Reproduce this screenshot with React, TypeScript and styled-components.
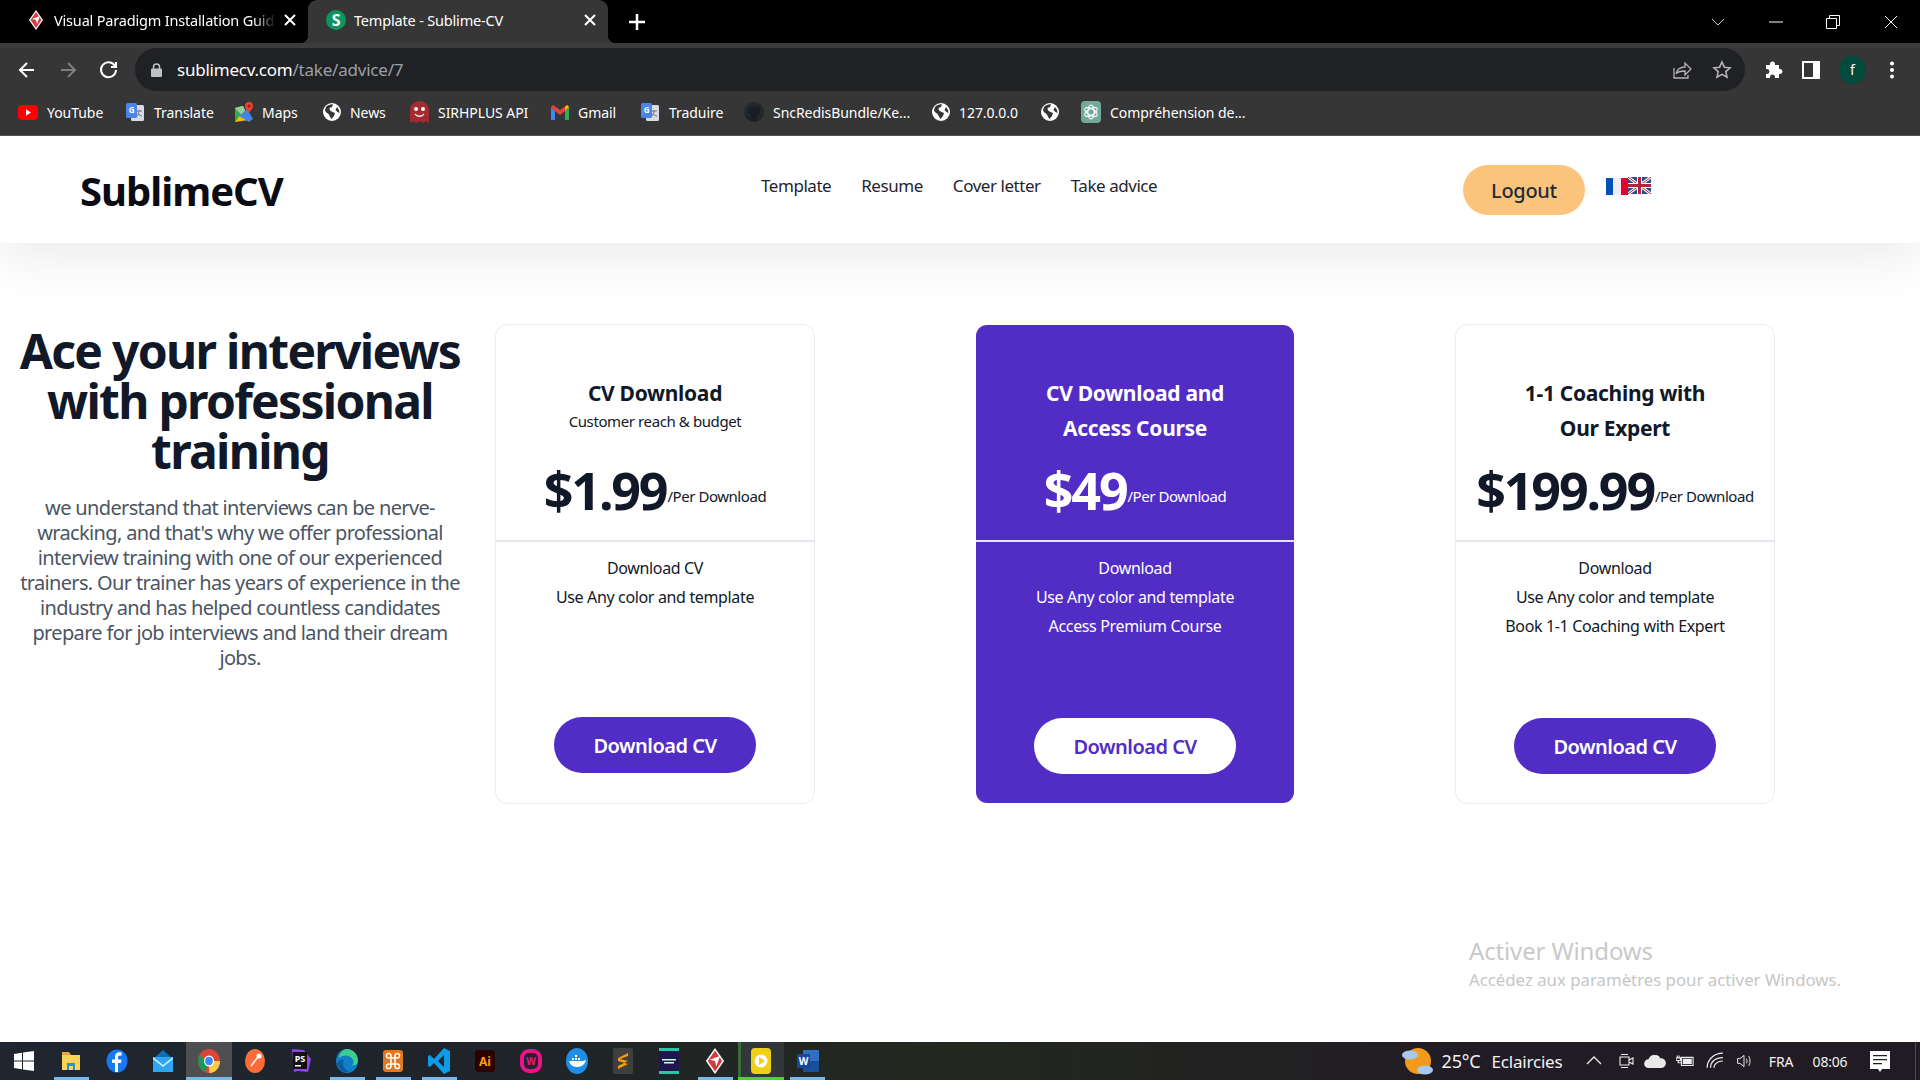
import React from 'react';
import styled, { createGlobalStyle } from 'styled-components';

const Global = createGlobalStyle`
  html, body { margin: 0; padding: 0; background: #fff; }
  body { font-family: "Noto Sans", "Open Sans", sans-serif; }
  * { box-sizing: border-box; }
`;

const Screen = styled.div`
  position: relative; width: 1920px; height: 1080px; overflow: hidden;
  display: flex; flex-direction: column; background: #fff;
`;

/* ---------- browser chrome ---------- */
const TabStrip = styled.div`
  height: 43px; background: #000; display: flex; align-items: stretch; padding-left: 8px; flex: none;
`;
const Tab = styled.div<{ $active?: boolean }>`
  position: relative; width: 300px; display: flex; align-items: center; gap: 8px; padding: 0 12px 3px 18px;
  background: ${p => (p.$active ? '#363636' : 'transparent')};
  border-radius: 9px 9px 0 0; color: #fff; font-size: 14.5px; letter-spacing: -0.18px;
  ${p => p.$active && `
    &::before, &::after {
      content: ''; position: absolute; bottom: 0; width: 8px; height: 8px;
    }
    &::before { left: -8px; background: radial-gradient(circle at 0 0, #000 8px, #363636 8.5px); }
    &::after { right: -8px; background: radial-gradient(circle at 100% 0, #000 8px, #363636 8.5px); }
  `}
`;
const TabTitle = styled.span<{ $fade?: boolean }>`
  flex: 1; white-space: nowrap; overflow: hidden;
  ${p => p.$fade && 'mask-image: linear-gradient(to right, #000 90%, transparent);'}
`;
const TabPlus = styled.div`
  width: 56px; display: flex; align-items: center; justify-content: center; padding-left: 2px;
`;
const WindowControls = styled.div`
  margin-left: auto; display: flex; align-items: center;
`;
const WinButton = styled.div<{ $w: number }>`
  width: ${p => p.$w}px; display: flex; justify-content: center; align-items: center;
`;
const ToolBar = styled.div`
  height: 48px; flex: none; background: #363636; border-top: 5px solid #3c3c3c; display: flex; align-items: stretch;
`;
const NavIcons = styled.div`
  width: 135px; padding-left: 17px; display: flex; align-items: center; gap: 21px;
`;
const UrlBar = styled.div`
  width: 1610px; background: #202124; border-radius: 22px; display: flex; align-items: center; padding: 0 13px 0 16px;
  font-size: 17px; letter-spacing: -0.22px; color: #fff;
`;
const UrlText = styled.span`
  margin-left: 15px; flex: 1;
  em { font-style: normal; color: #9aa0a6; }
`;
const UrlActions = styled.div`
  display: flex; align-items: center; gap: 20px;
`;
const ToolRight = styled.div`
  flex: 1; display: flex; align-items: center; padding-left: 18px; gap: 19px;
`;
const Avatar = styled.div`
  width: 27px; height: 28px; border-radius: 50%; background: #024a3c; color: #fff;
  font-size: 14px; display: flex; align-items: center; justify-content: center;
`;
const BookmarkBar = styled.div`
  height: 45px; flex: none; background: #363636; border-bottom: 1px solid #555;
  display: flex; align-items: center; padding: 0 0 2px 18px; color: #fff; font-size: 14px; letter-spacing: -0.05px;
`;
const Bookmark = styled.div<{ $w: number }>`
  width: ${p => p.$w}px; display: flex; align-items: center; gap: 9px; white-space: nowrap;
`;

/* ---------- page header ---------- */
const SiteHeader = styled.header`
  height: 107px; flex: none; background: #fff; display: flex; align-items: center; padding-left: 80px;
  box-shadow: 0 18px 50px rgba(0, 0, 0, 0.075); position: relative;
`;
const Logo = styled.div`
  width: 681px; font-size: 40px; font-weight: 700; color: #0b0b14; letter-spacing: -1px; line-height: 1; padding-top: 2px;
`;
const SiteNav = styled.nav`
  display: flex; gap: 30px; margin-bottom: 8px; width: 702px;
  font-size: 17px; color: #1f2430; letter-spacing: -0.45px;
`;
const LogoutButton = styled.button`
  width: 122px; height: 50px; border: none; border-radius: 25px; background: #fcc47b; color: #1f2d3a;
  font: 500 20px "Noto Sans", sans-serif; letter-spacing: -0.3px; padding: 2px 0 0;
`;
const Flags = styled.div`
  margin-left: 21px; margin-bottom: 7px; display: flex; align-items: center;
`;

/* ---------- page content ---------- */
const Main = styled.main`
  flex: 1; display: flex; padding-top: 81px; align-items: flex-start; gap: 15px;
`;
const Intro = styled.section`
  width: 480px; flex: none; text-align: center; padding-top: 2px;
`;
const Headline = styled.h1`
  margin: 0 0 20px; font-size: 48px; line-height: 50px; font-weight: 700; color: #111827; white-space: nowrap; letter-spacing: -1.7px;
`;
const Lead = styled.p`
  margin: -1px 0 0; font-size: 20px; line-height: 25px; color: #4b5563; white-space: nowrap; letter-spacing: -0.65px;
`;
const Plans = styled.div`
  display: flex; gap: 160px;
`;
const Card = styled.article<{ $featured?: boolean }>`
  width: 320px; height: 480px; display: flex; flex-direction: column; border-radius: 12px;
  border: 1px solid ${p => (p.$featured ? 'transparent' : '#e8ecf2')};
  background: ${p => (p.$featured ? '#512dc6' : '#fff')};
  background-clip: padding-box;
  color: ${p => (p.$featured ? '#fff' : '#111827')};
`;
const CardHead = styled.div`
  height: 217px; flex: none; border-bottom: 2px solid #e5e7eb; padding-top: 51px; text-align: center;
  display: flex; flex-direction: column;
`;
const CardTitle = styled.h3`
  margin: 0; font-size: 21px; line-height: 35px; font-weight: 700; letter-spacing: -0.3px; white-space: nowrap;
`;
const CardSub = styled.div`
  font-size: 15px; line-height: 24px; margin-top: -2px; letter-spacing: -0.4px;
`;
const PriceRow = styled.div`
  margin-top: auto; height: 86px; display: flex; align-items: flex-start; justify-content: center; white-space: nowrap; line-height: 72px;
`;
const Price = styled.span`
  font-size: 52px; font-weight: 700; letter-spacing: -2.2px;
`;
const Per = styled.span`
  font-size: 15px; line-height: 20px; letter-spacing: -0.45px; margin: 32px 0 0 1px;
`;
const CardBody = styled.div`
  flex: 1; display: flex; flex-direction: column; align-items: center; padding-top: 12px;
  font-size: 16px; line-height: 29px; letter-spacing: -0.35px;
`;
const DownloadButton = styled.button<{ $featured?: boolean; $low?: boolean }>`
  margin-top: auto; margin-bottom: ${p => (p.$low ? 29 : 30)}px; width: 202px; height: 56px; border: none; border-radius: 28px;
  background: ${p => (p.$featured ? '#fff' : '#512dc6')};
  color: ${p => (p.$featured ? '#512dc6' : '#fff')};
  font: 600 20px "Noto Sans", sans-serif; letter-spacing: -0.5px; padding: 0;
`;
const Watermark = styled.div`
  position: absolute; left: 1469px; top: 935px; color: #c6c6c6; font-size: 16.8px; line-height: 24px; letter-spacing: 0;
  strong { display: block; font-weight: 400; font-size: 24px; line-height: 32px; color: #c9c9c9; margin-bottom: 1px; letter-spacing: -0.15px; }
`;

/* ---------- taskbar ---------- */
const TaskBar = styled.footer`
  height: 38px; flex: none; display: flex; align-items: stretch; color: #f2f2f2;
  background: linear-gradient(90deg, #1f2630 0%, #1e2429 25%, #23281f 50%, #211d24 75%, #211b24 100%);
`;
const TaskItem = styled.div<{ $state?: 'open' | 'active' | 'flash' }>`
  width: 46px; flex: none; display: flex; align-items: center; justify-content: center; position: relative;
  background: ${p => (p.$state === 'active' ? '#4d4f53' : p.$state === 'flash' ? '#32383a' : 'transparent')};
  ${p => p.$state === 'flash' && 'box-shadow: inset 3px 0 0 #3a6b36;'}
  &::after {
    content: ''; position: absolute; bottom: 0; height: 3px;
    left: ${p => (p.$state === 'open' ? '6px' : '0')}; right: ${p => (p.$state === 'open' ? '5px' : '0')};
    background: ${p => (p.$state === 'flash' ? '#4fd13c' : p.$state ? '#76b9ed' : 'transparent')};
  }
`;
const StartButton = styled(TaskItem)`
  width: 48px;
`;
const Tray = styled.div`
  margin-left: auto; display: flex; align-items: center; padding-right: 10px;
`;
const TrayText = styled.span<{ $w: number; $size?: number }>`
  width: ${p => p.$w}px; font-size: ${p => p.$size ?? 14}px; text-align: center; white-space: nowrap; letter-spacing: -0.2px;
`;
const TraySlot = styled.div<{ $w: number }>`
  width: ${p => p.$w}px; display: flex; justify-content: center; align-items: center;
`;
const DesktopEdge = styled.div`
  position: absolute; right: 4px; bottom: 0; width: 1px; height: 38px; background: #4a4a4f;
`;

/* ---------- icons ---------- */
const Globe = () => (
  <svg width="18" height="18" viewBox="0 0 18 18">
    <circle cx="9" cy="9" r="9" fill="#fff" />
    <path d="M3 4c2-2 5-3 7-2.6L9 4 6.500 5 7 7.500 9.500 9 12 10l-1 3-2.500 3C7 14 6.500 12 5.500 11S2 9 2 7zM14 4l2 3 .5 3-2-1-2-2z" fill="#363636" />
  </svg>
);
const Translate = () => (
  <svg width="20" height="20" viewBox="0 0 20 20">
    <rect x="6" y="3" width="13" height="16" rx="1.500" fill="#d9dde3" />
    <rect x="1" y="1" width="11" height="15" rx="1.500" fill="#4a86e8" />
    <text x="6.500" y="11" fontSize="8" fill="#fff" textAnchor="middle" fontFamily="Noto Sans" fontWeight="700">G</text>
    <path d="M12 9h5M14 8v1c0 2-1 4-2 5M13 11c1 2 3 3 4 3" stroke="#6b7280" fill="none" />
  </svg>
);
const Youtube = () => (
  <svg width="20" height="15" viewBox="0 0 20 15">
    <rect width="20" height="15" rx="4" fill="#f00" />
    <path d="M8 4.200l5 3.300-5 3.300z" fill="#fff" />
  </svg>
);
const MapsIcon = () => (
  <svg width="18" height="20" viewBox="0 0 18 20">
    <path d="M0 6l8-2 6 14-14 2z" fill="#fbbc04" />
    <path d="M0 6l6 6-6 8z" fill="#34a853" />
    <path d="M4 14L12 7l6 10-4 3z" fill="#4285f4" />
    <path d="M0 6l8-2 2 4-4 4z" fill="#8fd19e" />
    <path d="M14 0a4 4 0 0 1 4 4c0 3-4 6-4 7-1-2-4-4-4-7a4 4 0 0 1 4-4z" fill="#ea4335" />
    <circle cx="14" cy="4" r="1.500" fill="#8c2318" />
  </svg>
);
const Ghost = () => (
  <svg width="19" height="22" viewBox="0 0 19 22">
    <path d="M0 9a9.500 9 0 0 1 19 0v13l-3-2-3 2-3.500-2-3.500 2-3-2-3 2z" fill="#a62b31" />
    <circle cx="6" cy="8" r="2" fill="#fff" /><circle cx="13" cy="8" r="2" fill="#fff" />
    <path d="M5 13c2 3 7 3 9 0" stroke="#fff" strokeWidth="1.300" fill="none" />
  </svg>
);
const GmailIcon = () => (
  <svg width="18" height="15" viewBox="0 0 18 15">
    <path d="M0 2v13h4V6z" fill="#4285f4" /><path d="M18 2v13h-4V6z" fill="#34a853" />
    <path d="M0 2l4 4 5 4 5-4 4-4-2-2-7 5-7-5z" fill="#ea4335" /><path d="M14 6l4-4-2-2-2 2z" fill="#fbbc04" />
  </svg>
);
const Github = () => (
  <svg width="20" height="20" viewBox="0 0 20 20">
    <circle cx="10" cy="10" r="10" fill="#23282e" />
    <path d="M7 19v-3c-3 1-3-1-4-2 2 0 2 2 4 1 0-1 0-1 1-2-3 0-4-2-4-4 0-1 0-2 1-3 0-1 0-2 .5-2 1 0 2 1 2.500 1h4c.5 0 1.500-1 2.500-1 .5 0 .5 1 .5 2 1 1 1 2 1 3 0 2-1 4-4 4 1 1 1 1.500 1 2v4z" fill="#1a1d21" />
  </svg>
);
const GptIcon = () => (
  <svg width="20" height="22" viewBox="0 0 20 22">
    <rect width="20" height="22" rx="4" fill="#74aa9c" />
    <g fill="none" stroke="#fff" strokeWidth="1.100">
      <ellipse cx="10" cy="11" rx="3.200" ry="7" />
      <ellipse cx="10" cy="11" rx="3.200" ry="7" transform="rotate(60 10 11)" />
      <ellipse cx="10" cy="11" rx="3.200" ry="7" transform="rotate(120 10 11)" />
    </g>
  </svg>
);
const ParadigmIcon = ({ size = 20 }: { size?: number }) => (
  <svg width={size} height={size} viewBox="0 0 20 20">
    <path d="M10 0l7 10-7 10-7-10z" fill="#fff" />
    <path d="M10 2l5.500 8L10 18l-5.500-8z" fill="#d13a3f" />
    <path d="M6 9l8-3-3 8-1-4z" fill="#fff" />
  </svg>
);
const SiteFavicon = () => (
  <svg width="20" height="20" viewBox="0 0 20 20">
    <circle cx="10" cy="10" r="10" fill="#0c9560" />
    <text x="10" y="15.500" textAnchor="middle" fontSize="16" fontWeight="700" fill="#fff" fontFamily="Noto Sans">S</text>
  </svg>
);
const Stroke = ({ d, size = 20, color = '#fff', w = 2, vb = 20 }: { d: string; size?: number; color?: string; w?: number; vb?: number }) => (
  <svg width={size} height={size} viewBox={`0 0 ${vb} ${vb}`} fill="none" stroke={color} strokeWidth={w}>
    <path d={d} />
  </svg>
);
const FlagFr = () => (
  <svg width="22" height="17" viewBox="0 0 22 17">
    <rect width="7" height="17" fill="#0050b5" /><rect x="7" width="8" height="17" fill="#eeeef2" /><rect x="15" width="7" height="17" fill="#e4002b" />
  </svg>
);
const FlagUk = () => (
  <svg width="23" height="17" viewBox="0 0 23 17" style={{ marginTop: -2 }}>
    <rect width="23" height="17" fill="#2f4a8f" />
    <path d="M0 0l23 17M23 0L0 17" stroke="#fff" strokeWidth="3" />
    <path d="M0 0l23 17M23 0L0 17" stroke="#b3253f" strokeWidth="1" />
    <path d="M11.500 0v17M0 8.500h23" stroke="#fff" strokeWidth="5" />
    <path d="M11.500 0v17M0 8.500h23" stroke="#b3253f" strokeWidth="3" />
  </svg>
);

/* taskbar glyphs */
const Tile = ({ bg, label, color = '#fff', r = 4, fs = 12 }: { bg: string; label: string; color?: string; r?: number; fs?: number }) => (
  <svg width="22" height="24" viewBox="0 0 22 24">
    <rect x="1" y="1" width="20" height="22" rx={r} fill={bg} />
    <text x="11" y="16.500" textAnchor="middle" fontSize={fs} fontWeight="700" fill={color} fontFamily="Noto Sans">{label}</text>
  </svg>
);
const Wamp = () => (
  <svg width="22" height="24" viewBox="0 0 22 24">
    <rect x="2" y="2" width="18" height="20" rx="7" fill="none" stroke="#ee1289" strokeWidth="4" />
    <text x="11" y="15.500" textAnchor="middle" fontSize="10" fontWeight="700" fill="#ee1289" fontFamily="Noto Sans">W</text>
  </svg>
);
const WinLogo = () => (
  <svg width="20" height="20" viewBox="0 0 20 20"><path d="M0 3l8-1.200V9.500H0zM9 1.600L20 0v9.500H9zM0 10.500h8v7.700L0 17zM9 10.500h11V20L9 18.400z" fill="#fff" /></svg>
);
const Explorer = () => (
  <svg width="20" height="20" viewBox="0 0 20 20">
    <path d="M1 1h7l2 3H1z" fill="#e8a33d" /><rect x="1" y="4" width="18" height="15" fill="#fbd25c" />
    <rect x="6" y="12" width="8" height="7" fill="#2a8fd4" /><rect x="8" y="15" width="4" height="4" fill="#fbd25c" />
  </svg>
);
const Facebook = () => (
  <svg width="22" height="24" viewBox="0 0 22 24">
    <ellipse cx="11" cy="12" rx="10.500" ry="11.500" fill="#1877f2" />
    <path d="M12 23v-9h3l.5-3.500H12V8.500c0-1 .5-2 2-2h1.700V3.500C13 3 9 3 9 8v2.500H6V14h3v9z" fill="#fff" />
  </svg>
);
const Mail = () => (
  <svg width="20" height="22" viewBox="0 0 20 22">
    <path d="M10 0l10 9H0z" fill="#0b6fb8" /><rect y="7" width="20" height="15" fill="#2ea7f0" />
    <path d="M0 7l10 8 10-8v2l-10 8L0 9z" fill="#cfeeff" />
  </svg>
);
const Chrome = () => (
  <svg width="22" height="24" viewBox="0 0 22 24">
    <ellipse cx="11" cy="12" rx="11" ry="12" fill="#db4437" />
    <path d="M11 12L1 6.500C-1 12 1 20 7 23z" fill="#0f9d58" /><path d="M11 12h11c0 6-4 12-11 12z" fill="#ffcd40" />
    <ellipse cx="11" cy="12" rx="5" ry="5.500" fill="#fff" /><ellipse cx="11" cy="12" rx="3.800" ry="4.200" fill="#4285f4" />
  </svg>
);
const Postman = () => (
  <svg width="22" height="24" viewBox="0 0 22 24">
    <ellipse cx="11" cy="12" rx="10" ry="12" fill="#ff6c37" /><path d="M7 17l7-9" stroke="#fff" strokeWidth="1.500" />
    <circle cx="15" cy="7" r="2.500" fill="#fff" />
  </svg>
);
const PhpStorm = () => (
  <svg width="22" height="26" viewBox="0 0 22 26">
    <path d="M2 1l12 1 7 9-3 13-10-1-4 1z" fill="#8f45e8" /><rect x="3" y="4" width="14" height="17" fill="#111" />
    <text x="10" y="14" textAnchor="middle" fontSize="9" fontWeight="700" fill="#fff" fontFamily="Noto Sans">PS</text>
    <rect x="5" y="17" width="6" height="1.500" fill="#fff" />
  </svg>
);
const Edge = () => (
  <svg width="22" height="24" viewBox="0 0 22 24">
    <ellipse cx="11" cy="12" rx="11" ry="12" fill="#0f7fc9" />
    <path d="M11 0c6 0 11 5 11 12 0 3-3 5-6 4 2-1 2-3 1-5C15 6 8 5 3 9c0-5 4-9 8-9z" fill="#3cce8c" />
    <path d="M8 11c-2 3-1 9 5 12-6 1-11-3-12-9 2-3 5-4 7-3z" fill="#0c59a4" />
  </svg>
);
const Xampp = () => (
  <svg width="22" height="24" viewBox="0 0 22 24">
    <rect x="1" y="1" width="20" height="22" rx="3" fill="#e07a22" />
    <path d="M9 9H7a2.300 2.300 0 1 1 2-2v10a2.300 2.300 0 1 1-2-2h8a2.300 2.300 0 1 1-2 2V7a2.300 2.300 0 1 1 2 2z" stroke="#fff" strokeWidth="1.500" fill="none" />
  </svg>
);
const VsCode = () => (
  <svg width="22" height="26" viewBox="0 0 22 26">
    <path d="M16 0l6 3v20l-6 3L6 15l-4 4-2-1V8l2-1 4 4zM16 7l-6 6 6 6z" fill="#0f9be8" />
  </svg>
);
const Docker = () => (
  <svg width="22" height="26" viewBox="0 0 22 26">
    <ellipse cx="11" cy="13" rx="11" ry="13" fill="#1d8fe8" />
    <path d="M3 13h14c1 0 2-1 3-1-1 4-4 7-9 7-5 0-7-3-8-6z" fill="#fff" />
    <g fill="#fff"><rect x="6" y="10" width="2" height="2" /><rect x="9" y="10" width="2" height="2" /><rect x="12" y="10" width="2" height="2" /><rect x="9" y="7" width="2" height="2" /></g>
  </svg>
);
const Sublime = () => (
  <svg width="20" height="26" viewBox="0 0 20 26">
    <rect width="20" height="26" rx="2" fill="#3f3f3f" />
    <path d="M15 5L5 10v3l10 3v-3L7 11l8-3zM5 18l10-5v3l-10 5z" fill="#f79a12" />
  </svg>
);
const Banner = () => (
  <svg width="20" height="26" viewBox="0 0 20 26">
    <rect width="20" height="26" fill="#1f1650" /><rect y="0" width="20" height="3" fill="#25c9a5" /><rect y="23" width="20" height="3" fill="#25c9a5" />
    <rect x="3" y="11" width="14" height="1.500" fill="#cfd" /><rect x="5" y="14" width="10" height="1.500" fill="#cfd" />
  </svg>
);
const Player = () => (
  <svg width="20" height="26" viewBox="0 0 20 26">
    <rect width="20" height="26" rx="4" fill="#f0cf16" /><circle cx="10" cy="13" r="6.500" fill="#fff" />
    <path d="M8 9l6 4-6 4z" fill="#f0cf16" />
  </svg>
);
const Word = () => (
  <svg width="24" height="22" viewBox="-2 0 24 22">
    <rect x="6" y="0" width="16" height="22" fill="#2f6fc4" /><rect x="6" y="11" width="16" height="11" fill="#1b4f9c" />
    <rect x="0" y="4" width="13" height="14" fill="#16479a" />
    <text x="6.500" y="15" textAnchor="middle" fontSize="10" fontWeight="700" fill="#fff" fontFamily="Noto Sans">W</text>
  </svg>
);

const taskItems: { icon: React.ReactNode; state?: 'open' | 'active' | 'flash' }[] = [
  { icon: <Explorer />, state: 'open' },
  { icon: <Facebook /> },
  { icon: <Mail /> },
  { icon: <Chrome />, state: 'active' },
  { icon: <Postman /> },
  { icon: <PhpStorm /> },
  { icon: <Edge />, state: 'open' },
  { icon: <Xampp />, state: 'open' },
  { icon: <VsCode />, state: 'open' },
  { icon: <Tile bg="#2b0000" label="Ai" color="#ff9a00" /> },
  { icon: <Wamp /> },
  { icon: <Docker /> },
  { icon: <Sublime /> },
  { icon: <Banner /> },
  { icon: <ParadigmIcon size={26} />, state: 'open' },
  { icon: <Player />, state: 'flash' },
  { icon: <Word />, state: 'open' },
];

const bookmarks: { w: number; icon: React.ReactNode; label?: string }[] = [
  { w: 107, icon: <Youtube />, label: 'YouTube' },
  { w: 110, icon: <Translate />, label: 'Translate' },
  { w: 88, icon: <MapsIcon />, label: 'Maps' },
  { w: 87, icon: <Globe />, label: 'News' },
  { w: 141, icon: <Ghost />, label: 'SIRHPLUS API' },
  { w: 89, icon: <GmailIcon />, label: 'Gmail' },
  { w: 104, icon: <Translate />, label: 'Traduire' },
  { w: 188, icon: <Github />, label: 'SncRedisBundle/Ke...' },
  { w: 109, icon: <Globe />, label: '127.0.0.0' },
  { w: 40, icon: <Globe /> },
  { w: 170, icon: <GptIcon />, label: 'Compréhension de...' },
];

const plans = [
  { title: ['CV Download'], sub: 'Customer reach & budget', price: '$1.99', items: ['Download CV', 'Use Any color and template'], low: false },
  { title: ['CV Download and', 'Access Course'], price: '$49', featured: true, items: ['Download', 'Use Any color and template', 'Access Premium Course'], low: true },
  { title: ['1-1 Coaching with', 'Our Expert'], price: '$199.99', items: ['Download', 'Use Any color and template', 'Book 1-1 Coaching with Expert'], low: true },
];

const leadLines = [
  'we understand that interviews can be nerve-',
  "wracking, and that's why we offer professional",
  'interview training with one of our experienced',
  'trainers. Our trainer has years of experience in the',
  'industry and has helped countless candidates',
  'prepare for job interviews and land their dream',
  'jobs.',
];

export default function App() {
  return (
    <Screen>
      <Global />
      <TabStrip>
        <Tab>
          <ParadigmIcon />
          <TabTitle $fade>Visual Paradigm Installation Guide</TabTitle>
          <Stroke size={12} vb={12} d="M1 1l10 10M11 1L1 11" />
        </Tab>
        <Tab $active>
          <SiteFavicon />
          <TabTitle>Template - Sublime-CV</TabTitle>
          <Stroke size={12} vb={12} d="M1 1l10 10M11 1L1 11" />
        </Tab>
        <TabPlus><Stroke size={16} vb={16} w={2.500} d="M8 0v16M0 8h16" /></TabPlus>
        <WindowControls>
          <WinButton $w={58}><Stroke size={14} vb={14} w={1} color="#ccc" d="M1 4l6 6 6-6" /></WinButton>
          <WinButton $w={57}><Stroke size={14} vb={14} w={1} d="M0 7h14" /></WinButton>
          <WinButton $w={58}><Stroke size={14} vb={14} w={1} d="M0.500 3.500h10v10h-10zM3.500 3V.500h10v10H11" /></WinButton>
          <WinButton $w={58}><Stroke size={14} vb={14} w={1} d="M1 1l12 12M13 1L1 13" /></WinButton>
        </WindowControls>
      </TabStrip>

      <ToolBar>
        <NavIcons>
          <Stroke d="M17 10H3M10 3l-7 7 7 7" />
          <Stroke color="#7f7f7f" d="M3 10h14M10 3l7 7-7 7" />
          <Stroke d="M16 6a7.500 7.500 0 1 0 1 4M17 2v5h-5" />
        </NavIcons>
        <UrlBar>
          <svg width="11" height="14" viewBox="0 0 11 14"><path d="M2.500 6V4a3 3 0 0 1 6 0v2" stroke="#bdc1c6" fill="none" strokeWidth="1.500" /><rect y="5.500" width="11" height="8.500" rx="1" fill="#bdc1c6" /></svg>
          <UrlText>sublimecv.com<em>/take/advice/7</em></UrlText>
          <UrlActions>
            <Stroke color="#b5b5b5" w={1.300} d="M2 8v10h14v-3M4 14c1-5 5-7 9-7V3l6 6-6 6v-4c-3 0-7 0-9 3z" />
            <Stroke color="#b5b5b5" w={1.600} d="M10 2l2.400 5.200 5.600.6-4.200 3.800 1.200 5.600L10 14.400 5 17.200l1.200-5.600L2 7.800l5.600-.6z" />
          </UrlActions>
        </UrlBar>
        <ToolRight>
          <svg width="20" height="20" viewBox="0 0 20 20"><path d="M3 5h4V4a2.500 2.500 0 0 1 5 0v1h4v4h1a2.500 2.500 0 0 1 0 5h-1v4h-4v-1a2.500 2.500 0 0 0-5 0v1H3v-4h1a2.500 2.500 0 0 0 0-5H3z" fill="#fff" /></svg>
          <svg width="18" height="18" viewBox="0 0 18 18"><path fillRule="evenodd" d="M0 0h18v18H0zM2 2h9v14H2z" fill="#fff" /></svg>
          <Avatar>f</Avatar>
          <svg width="20" height="20" viewBox="0 0 20 20" style={{ marginLeft: -3 }}><g fill="#fff"><circle cx="10" cy="3.500" r="2" /><circle cx="10" cy="10" r="2" /><circle cx="10" cy="16.500" r="2" /></g></svg>
        </ToolRight>
      </ToolBar>

      <BookmarkBar>
        {bookmarks.map((b, i) => (
          <Bookmark key={i} $w={b.w}>{b.icon}{b.label && <span>{b.label}</span>}</Bookmark>
        ))}
      </BookmarkBar>

      <SiteHeader>
        <Logo>SublimeCV</Logo>
        <SiteNav>
          <span>Template</span><span>Resume</span><span>Cover letter</span><span>Take advice</span>
        </SiteNav>
        <LogoutButton>Logout</LogoutButton>
        <Flags><FlagFr /><FlagUk /></Flags>
      </SiteHeader>

      <Main>
        <Intro>
          <Headline>Ace your interviews<br />with professional<br />training</Headline>
          <Lead>{leadLines.map((l, i) => <React.Fragment key={i}>{l}<br /></React.Fragment>)}</Lead>
        </Intro>
        <Plans>
          {plans.map((p, i) => (
            <Card key={i} $featured={p.featured}>
              <CardHead>
                {p.title.map(t => <CardTitle key={t}>{t}</CardTitle>)}
                {p.sub && <CardSub>{p.sub}</CardSub>}
                <PriceRow><Price>{p.price}</Price><Per>/Per Download</Per></PriceRow>
              </CardHead>
              <CardBody>
                {p.items.map(it => <div key={it}>{it}</div>)}
                <DownloadButton $featured={p.featured} $low={p.low}>Download CV</DownloadButton>
              </CardBody>
            </Card>
          ))}
        </Plans>
      </Main>

      <Watermark><strong>Activer Windows</strong>Accédez aux paramètres pour activer Windows.</Watermark>

      <TaskBar>
        <StartButton><WinLogo /></StartButton>
        {taskItems.map((t, i) => <TaskItem key={i} $state={t.state}>{t.icon}</TaskItem>)}
        <Tray>
          <TraySlot $w={40}>
            <svg width="32" height="28" viewBox="0 0 32 28">
              <circle cx="16" cy="14" r="13" fill="#f39a1c" />
              <ellipse cx="8" cy="8" rx="8" ry="4.500" fill="#a9c8ee" /><ellipse cx="23" cy="23" rx="8" ry="4.500" fill="#a9c8ee" />
            </svg>
          </TraySlot>
          <TrayText $w={46} $size={18}>25°C</TrayText>
          <TrayText $w={86} $size={17}>Eclaircies</TrayText>
          <TraySlot $w={48}><Stroke size={16} vb={16} w={1.300} color="#eee" d="M1 11l7-7 7 7" /></TraySlot>
          <TraySlot $w={16}><Stroke size={18} vb={16} w={1.100} color="#eee" d="M2 4h9v8H2zM11 7l4-2v6l-4-2M3 1.500h7M3 14.500h7" /></TraySlot>
          <TraySlot $w={42}><svg width="22" height="13" viewBox="0 0 20 12"><path d="M4 12a4 4 0 0 1 0-8 6 6 0 0 1 11-1 4.500 4.500 0 0 1 1 9z" fill="#e8e8e8" /></svg></TraySlot>
          <TraySlot $w={18}>
            <svg width="20" height="14" viewBox="0 0 20 14" fill="none" stroke="#eee" strokeWidth="1.200"><path d="M6 3h13v9H6zM0 3.500h5v3H0zM1.500 1v2.500M3.500 1v2.500M2.500 6.500V9H6" /><rect x="7.500" y="4.500" width="10" height="6" fill="#eee" stroke="none" /></svg>
          </TraySlot>
          <TraySlot $w={42}><Stroke size={18} vb={16} w={1.100} color="#eee" d="M1 14C1 7 7 1 15 1M4 14c0-5 4-9 11-9M7 14c0-3 3-6 8-6" /></TraySlot>
          <TraySlot $w={16}><Stroke size={20} vb={20} w={1.200} color="#eee" d="M2 7h3l5-4v14l-5-4H2zM13 7c1 2 1 4 0 6M16 4c2 3 2 9 0 12" /></TraySlot>
          <TrayText $w={58}>FRA</TrayText>
          <TrayText $w={40}>08:06</TrayText>
          <TraySlot $w={60}>
            <svg width="20" height="21" viewBox="0 0 20 21"><path fillRule="evenodd" d="M0 0h20v18h-8l-2 3-2-3H0zM3 4v1.300h14V4zM3 8v1.300h14V8zM3 12v1.300h9V12z" fill="#fff" /></svg>
          </TraySlot>
        </Tray>
        <DesktopEdge />
      </TaskBar>
    </Screen>
  );
}
